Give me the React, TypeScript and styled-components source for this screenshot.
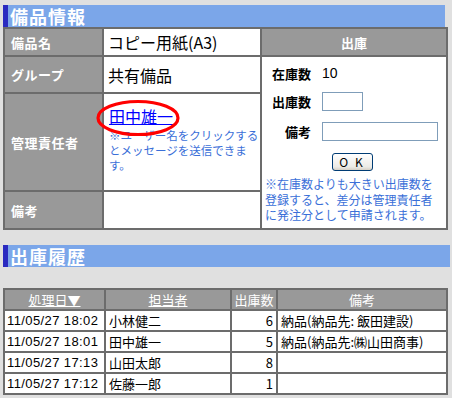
import React from "react";
import styled, { createGlobalStyle } from "styled-components";

const GlobalStyle = createGlobalStyle`
  body {
    margin: 0;
    background: #e0e0e0;
    font-family: "Noto Sans CJK JP", "DejaVu Sans", sans-serif;
  }
`;

interface HistoryRow {
  date: string;
  user: string;
  count: number;
  note: string;
}

const history: HistoryRow[] = [
  { date: "11/05/27 18:02", user: "小林健二", count: 6, note: "納品(納品先: 飯田建設)" },
  { date: "11/05/27 18:01", user: "田中雄一", count: 5, note: "納品(納品先:㈱山田商事)" },
  { date: "11/05/27 17:13", user: "山田太郎", count: 8, note: "" },
  { date: "11/05/27 17:12", user: "佐藤一郎", count: 1, note: "" },
];

function App() {
  return (
    <>
      <GlobalStyle />
      <Page>
        <SectionTitle $width={440}>備品情報</SectionTitle>
        <InfoTable>
          <colgroup>
            <col style={{ width: 99 }} />
            <col style={{ width: 158 }} />
            <col />
          </colgroup>
          <tbody>
            <tr>
              <LabelCell $height={26}>備品名</LabelCell>
              <ValueCell>コピー用紙(A3)</ValueCell>
              <PanelHead>出庫</PanelHead>
            </tr>
            <tr>
              <LabelCell $height={35}>グループ</LabelCell>
              <ValueCell>共有備品</ValueCell>
              <PanelCell rowSpan={3}>
                <FormGrid>
                  <FormLabel>在庫数</FormLabel>
                  <Stock>10</Stock>
                  <FormLabel>出庫数</FormLabel>
                  <div>
                    <TextInput $width={41} />
                  </div>
                  <FormLabel>備考</FormLabel>
                  <div>
                    <TextInput $width={116} />
                  </div>
                </FormGrid>
                <ButtonRow>
                  <OkButton>O K</OkButton>
                </ButtonRow>
                <PanelNote>
                  ※在庫数よりも大きい出庫数を
                  <br />
                  登録すると、差分は管理責任者
                  <br />
                  に発注分として申請されます。
                </PanelNote>
              </PanelCell>
            </tr>
            <tr>
              <LabelCell $height={96}>管理責任者</LabelCell>
              <ManagerCell>
                <UserLink href="#">田中雄一</UserLink>
                <Ring viewBox="0 0 84 38">
                  <ellipse cx="42" cy="19" rx="40" ry="16.5" fill="none" stroke="#ff0000" strokeWidth="3.2" />
                </Ring>
                <ManagerNote>
                  ※ユーザー名をクリックする
                  <br />
                  とメッセージを送信できま
                  <br />
                  す。
                </ManagerNote>
              </ManagerCell>
            </tr>
            <tr>
              <LabelCell $height={36}>備考</LabelCell>
              <ValueCell />
            </tr>
          </tbody>
        </InfoTable>

        <SectionTitle $width={445} $top={15}>出庫履歴</SectionTitle>

        <HistoryTable>
          <colgroup>
            <col style={{ width: 101 }} />
            <col style={{ width: 126 }} />
            <col style={{ width: 46 }} />
            <col />
          </colgroup>
          <thead>
            <tr>
              <HistoryHead>
                <SortLink href="#">処理日▼</SortLink>
              </HistoryHead>
              <HistoryHead>
                <SortLink href="#">担当者</SortLink>
              </HistoryHead>
              <HistoryHead>出庫数</HistoryHead>
              <HistoryHead>備考</HistoryHead>
            </tr>
          </thead>
          <tbody>
            {history.map((row) => (
              <tr key={row.date}>
                <DateCell>{row.date}</DateCell>
                <HistoryCell>{row.user}</HistoryCell>
                <HistoryCell $align="right">{row.count}</HistoryCell>
                <HistoryCell>{row.note}</HistoryCell>
              </tr>
            ))}
          </tbody>
        </HistoryTable>
      </Page>
    </>
  );
}

const Page = styled.div`
  padding: 5px 0 0 3px;
  width: 445px;
`;

const SectionTitle = styled.div<{ $width: number; $top?: number }>`
  width: ${(p) => p.$width - 5}px;
  height: 22px;
  margin-top: ${(p) => p.$top || 0}px;
  background: #7ba6e9;
  border-left: 5px solid #2a2ac0;
  color: #fff;
  font-weight: bold;
  font-size: 18px;
  line-height: 22px;
  padding-left: 2px;
  letter-spacing: 1px;
`;

const InfoTable = styled.table`
  width: 445px;
  border-collapse: collapse;
  table-layout: fixed;
  border: 2px solid #6c6c6c;
`;

const LabelCell = styled.td<{ $height: number }>`
  height: ${(p) => p.$height}px;
  background: #999999;
  border: 2px solid #6c6c6c;
  color: #fff;
  font-weight: bold;
  font-size: 13px;
  letter-spacing: 0.5px;
  padding: 0 0 0 6px;
  vertical-align: middle;
`;

const ValueCell = styled.td`
  background: #fff;
  border: 2px solid #6c6c6c;
  font-size: 16px;
  padding: 0 0 0 4px;
  vertical-align: middle;
  color: #000;
`;

const PanelHead = styled.td`
  background: #999999;
  border: 2px solid #6c6c6c;
  color: #fff;
  font-weight: bold;
  font-size: 13px;
  text-align: center;
`;

const PanelCell = styled.td`
  background: #fff;
  border: 2px solid #6c6c6c;
  vertical-align: top;
  padding: 2px 0 4px 0;
`;

const FormGrid = styled.div`
  display: grid;
  grid-template-columns: 49px 1fr;
  grid-template-rows: 28px 28px 32px;
  column-gap: 11px;
  align-items: center;
`;

const FormLabel = styled.div`
  text-align: right;
  font-weight: bold;
  font-size: 13px;
  color: #000;
`;

const Stock = styled.div`
  font-size: 14px;
  font-family: "Liberation Sans", sans-serif;
`;

const TextInput = styled.input<{ $width: number }>`
  display: block;
  box-sizing: border-box;
  width: ${(p) => p.$width}px;
  height: 19px;
  border: 1px solid #7f9db9;
  background: #fff;
  padding: 0;
`;

const ButtonRow = styled.div`
  display: flex;
  justify-content: center;
  margin-top: 6px;
  padding-right: 4px;
`;

const OkButton = styled.button`
  width: 41px;
  height: 18px;
  padding: 0;
  border: 1px solid #003c74;
  border-radius: 3px;
  background: linear-gradient(#ffffff, #ecebe6 80%, #d6d0c5);
  font-family: "Noto Sans CJK JP", sans-serif;
  font-size: 12px;
  line-height: 16px;
  letter-spacing: 2px;
  color: #000;
`;

const PanelNote = styled.div`
  margin-top: 5px;
  padding-left: 3px;
  font-size: 12px;
  line-height: 15.5px;
  color: #3a6fd8;
  white-space: nowrap;
`;

const ManagerCell = styled(ValueCell)`
  position: relative;
  padding: 10px 0 0 5px;
  vertical-align: top;
`;

const UserLink = styled.a`
  display: inline-block;
  font-size: 16px;
  line-height: 22px;
  color: #0000ff;
  text-decoration: underline;
  padding-right: 4px;
`;

const Ring = styled.svg`
  position: absolute;
  left: -8px;
  top: 5px;
  width: 84px;
  height: 38px;
  pointer-events: none;
`;

const ManagerNote = styled.div`
  font-size: 11.5px;
  line-height: 15px;
  color: #3a6fd8;
  white-space: nowrap;
`;

const HistoryTable = styled.table`
  width: 445px;
  margin-top: 21px;
  border-collapse: collapse;
  table-layout: fixed;
  border: 2px solid #6c6c6c;
  font-size: 13px;
`;

const HistoryHead = styled.th`
  height: 19px;
  padding: 0;
  background: #999999;
  border: 2px solid #6c6c6c;
  color: #fff;
  font-weight: normal;
  font-size: 13px;
  text-align: center;
`;

const SortLink = styled.a`
  color: #fff;
  text-decoration: underline;
`;

const HistoryCell = styled.td<{ $align?: string }>`
  height: 19px;
  padding: 0 3px;
  background: #fff;
  border: 2px solid #6c6c6c;
  text-align: ${(p) => p.$align || "left"};
  color: #000;
  white-space: nowrap;
  overflow: hidden;
`;

const DateCell = styled(HistoryCell)`
  font-family: "Liberation Sans", sans-serif;
  font-size: 13px;
  letter-spacing: 0.4px;
  padding: 0 2px;
`;

export default App;
